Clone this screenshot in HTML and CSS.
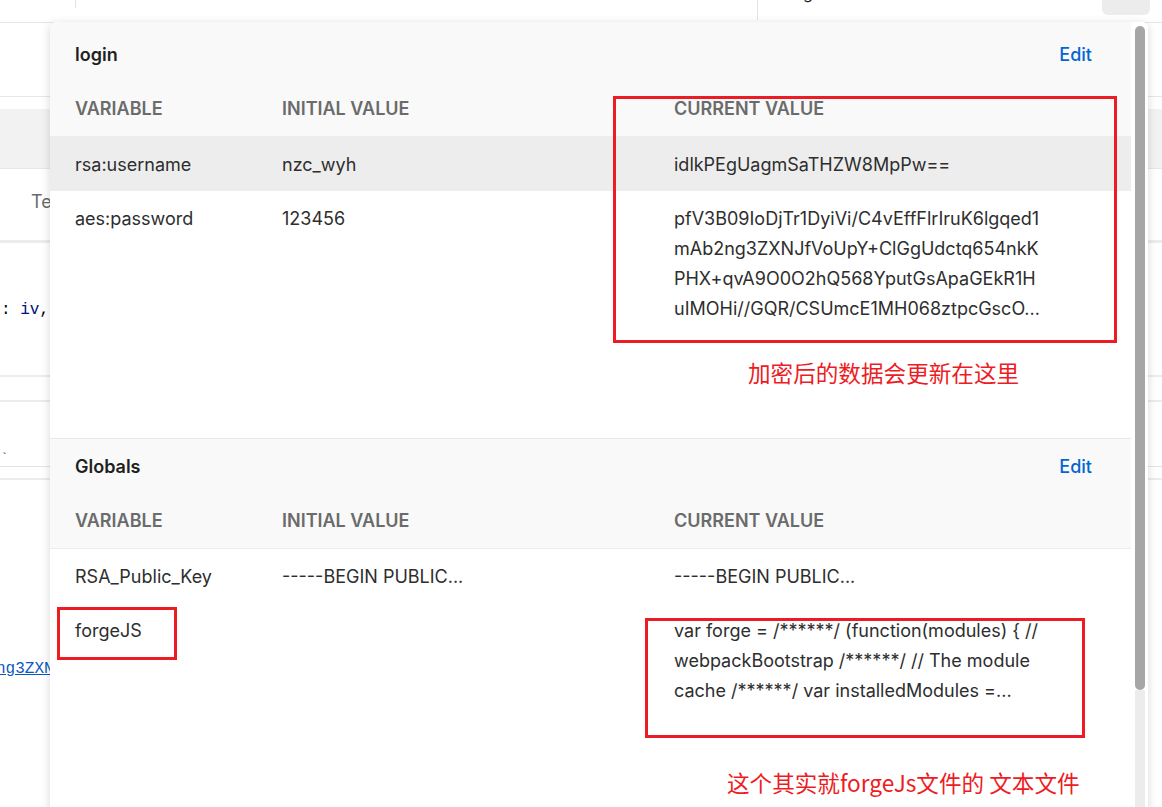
FILE: index.html
```html
<!DOCTYPE html>
<html lang="zh">
<head>
<meta charset="utf-8">
<title>Environment quick look</title>
<link rel="stylesheet" href="styles.css">
</head>
<body>
<div class="app">
  <header class="topbar">
    <div class="tb-a"><span class="tb-a-line"></span></div>
    <div class="tb-b"><span class="tb-b-line"></span></div>
    <div class="tb-c"><span class="tb-glyph">g</span></div>
    <div class="tb-btn"></div>
  </header>
  <section class="workspace">
    <div class="req-bar"></div>
    <div class="req-tabs"></div>
    <div class="tabs-row"><span class="tab-label">Tests</span></div>
    <div class="code"><span class="code-line">: <span class="tok-var">iv</span>, mode: CryptoJS.mode.CBC</span></div>
    <div class="split split-a"></div>
    <div class="split split-b"><span class="code-line small">`</span></div>
    <div class="split split-c"></div>
    <div class="response"><span class="resp-link">ng3ZXNJfVoUpY+ClGgUdctq654nkK</span></div>
  </section>
</div>

<div class="popover">
  <div class="pop-content">
    <section class="env env-login">
      <div class="env-head env-head-first">
        <div class="env-title-row">
          <span class="env-title">login</span>
          <span class="env-edit">Edit</span>
        </div>
        <div class="env-grid env-cols">
          <span>VARIABLE</span><span>INITIAL VALUE</span><span>CURRENT VALUE</span>
        </div>
      </div>
      <div class="env-grid env-row is-hover">
        <span>rsa:username</span><span>nzc_wyh</span><span>idlkPEgUagmSaTHZW8MpPw==</span>
      </div>
      <div class="env-grid env-row">
        <span>aes:password</span><span>123456</span>
        <span class="multi">
          <span class="ln">pfV3B09IoDjTr1DyiVi/C4vEffFlrIruK6lgqed1</span>
          <span class="ln">mAb2ng3ZXNJfVoUpY+ClGgUdctq654nkK</span>
          <span class="ln">PHX+qvA9O0O2hQ568YputGsApaGEkR1H</span>
          <span class="ln">uIMOHi//GQR/CSUmcE1MH068ztpcGscO...</span>
        </span>
      </div>
    </section>
    <section class="env env-globals">
      <div class="env-head">
        <div class="env-title-row">
          <span class="env-title">Globals</span>
          <span class="env-edit">Edit</span>
        </div>
        <div class="env-grid env-cols">
          <span>VARIABLE</span><span>INITIAL VALUE</span><span>CURRENT VALUE</span>
        </div>
      </div>
      <div class="env-grid env-row">
        <span>RSA_Public_Key</span><span>-----BEGIN PUBLIC...</span><span>-----BEGIN PUBLIC...</span>
      </div>
      <div class="env-grid env-row">
        <span>forgeJS</span><span></span>
        <span class="multi">
          <span class="ln">var forge = /******/ (function(modules) { //</span>
          <span class="ln">webpackBootstrap /******/ // The module</span>
          <span class="ln">cache /******/ var installedModules =...</span>
        </span>
      </div>
    </section>
  </div>
  <div class="pop-scroll"><div class="thumb"></div></div>
</div>

<div class="mark mark-current"></div>
<div class="mark mark-forge-name"></div>
<div class="mark mark-forge-value"></div>
<p class="note note-1">加密后的数据会更新在这里</p>
<p class="note note-2">这个其实就forgeJs文件的 文本文件</p>
</body>
</html>
```

FILE: styles.css
```css
* { box-sizing: border-box; }
html, body { margin: 0; padding: 0; }
body {
  width: 1162px;
  height: 807px;
  overflow: hidden;
  position: relative;
  background: #fff;
  font-family: Inter, "Noto Sans", sans-serif;
  color: #212121;
}

/* ---------- background app ---------- */
.app { display: flex; flex-direction: column; }
.topbar {
  display: flex;
  height: 23px;
  border-bottom: 1px solid #e6e6e6;
}
.tb-a { width: 76px; }
.tb-a-line { display: block; margin-left: 75px; width: 1px; height: 8px; background: #e3e3e3; }
.tb-b { width: 682px; }
.tb-b-line { display: block; margin-left: 681px; width: 1px; height: 20px; background: #e3e3e3; }
.tb-c { flex: 1; position: relative; overflow: hidden; }
.tb-glyph {
  display: block;
  margin-left: 45px;
  margin-top: -16px;
  font-size: 16px;
  line-height: 18px;
  color: #212121;
}
.tb-btn {
  width: 48px;
  height: 15px;
  margin-right: 12px;
  background: #ececec;
  border-radius: 0 0 6px 6px;
}

.workspace { display: flex; flex-direction: column; }
.req-bar { height: 74px; border-bottom: 1px solid #e6e6e6; }
.req-tabs { height: 60px; margin-top: 12px; background: #f2f2f2; border-bottom: 1px solid #e6e6e6; }
.tabs-row {
  height: 74px;
  border-bottom: 3px solid #ececec;
  display: flex;
  align-items: center;
  padding-left: 31px;
  padding-bottom: 6px;
}
.tab-label { font-size: 18px; color: #6b6b6b; white-space: nowrap; }
.code {
  height: 134px;
  border-bottom: 2px solid #ececec;
  display: flex;
  align-items: center;
  padding-top: 2px;
}
.code-line {
  font-family: "Liberation Mono", "DejaVu Sans Mono", monospace;
  font-size: 16px;
  color: #000;
  white-space: nowrap;
  padding-left: 1px;
}
.code-line.small { color: #333; font-size: 12px; }
.tok-var { color: #001080; }
.split-a { height: 25px; border-bottom: 2px solid #ececec; }
.split-b { height: 65px; border-bottom: 1px solid #e3e3e3; display: flex; align-items: flex-end; }
.split-c { height: 13px; border-bottom: 2px solid #ececec; }
.response { height: 330px; padding-top: 180px; }
.resp-link {
  font-family: "Liberation Mono", "DejaVu Sans Mono", monospace;
  font-size: 16px;
  color: #0b57c0;
  text-decoration: underline;
  white-space: nowrap;
  display: block;
  margin-left: -4px;
}

/* ---------- popover ---------- */
.popover {
  position: absolute;
  left: 50px;
  top: 22px;
  width: 1098px;
  height: 800px;
  display: flex;
  background: #fff;
  border-radius: 6px 6px 0 0;
  box-shadow: 0 2px 10px rgba(0, 0, 0, 0.16);
  overflow: hidden;
}
.pop-content { flex: 1; display: flex; flex-direction: column; }
.pop-scroll {
  width: 17px;
  padding: 4px 3px 0 4px;
  display: flex;
  flex-direction: column;
  background: #fff;
}
.pop-scroll::after { content: ""; flex: 1; background: #ececec; }
.thumb {
  height: 664px;
  background: #a6a6a6;
  border-radius: 5px;
}

.env-login { padding-bottom: 103px; }
.env-globals { border-top: 1px solid #e9e9e9; }
.env-head {
  background: #f9f9f9;
  padding: 15px 39px 0 25px;
  border-bottom: 1px solid #ececec;
}
.env-head-first { padding-top: 20px; }
.env-title-row {
  display: flex;
  justify-content: space-between;
  align-items: center;
  height: 24px;
}
.env-title { font-size: 18px; font-weight: 600; color: #1f1f1f; }
.env-edit { font-size: 18px; font-weight: 500; color: #0265d2; }
.env-grid {
  display: grid;
  grid-template-columns: 207px 392px 1fr;
  font-size: 18px;
  line-height: 30px;
}
.env-cols {
  margin-top: 28px;
  padding-bottom: 12px;
  font-weight: 600;
  color: #6b6b6b;
}
.env-row {
  padding: 13px 25px 11px;
  color: #2e2e2e;
}
.env-row.is-hover { background: #ededed; }
.multi { display: flex; flex-direction: column; }
.ln { white-space: nowrap; }

/* ---------- annotation overlays ---------- */
.mark {
  position: absolute;
  border: 3px solid #ed1c24;
}
.mark-current { left: 613px; top: 96px; width: 504px; height: 247px; }
.mark-forge-name { left: 57px; top: 607px; width: 120px; height: 53px; }
.mark-forge-value { left: 645px; top: 618px; width: 440px; height: 120px; }
.note {
  position: absolute;
  margin: 0;
  font-family: "Noto Sans CJK SC", "Noto Sans", sans-serif;
  font-size: 22.6px;
  line-height: 30px;
  color: #ed1c24;
  white-space: nowrap;
}
.note-1 { left: 748px; top: 358px; }
.note-2 { left: 727px; top: 768px; }
```
